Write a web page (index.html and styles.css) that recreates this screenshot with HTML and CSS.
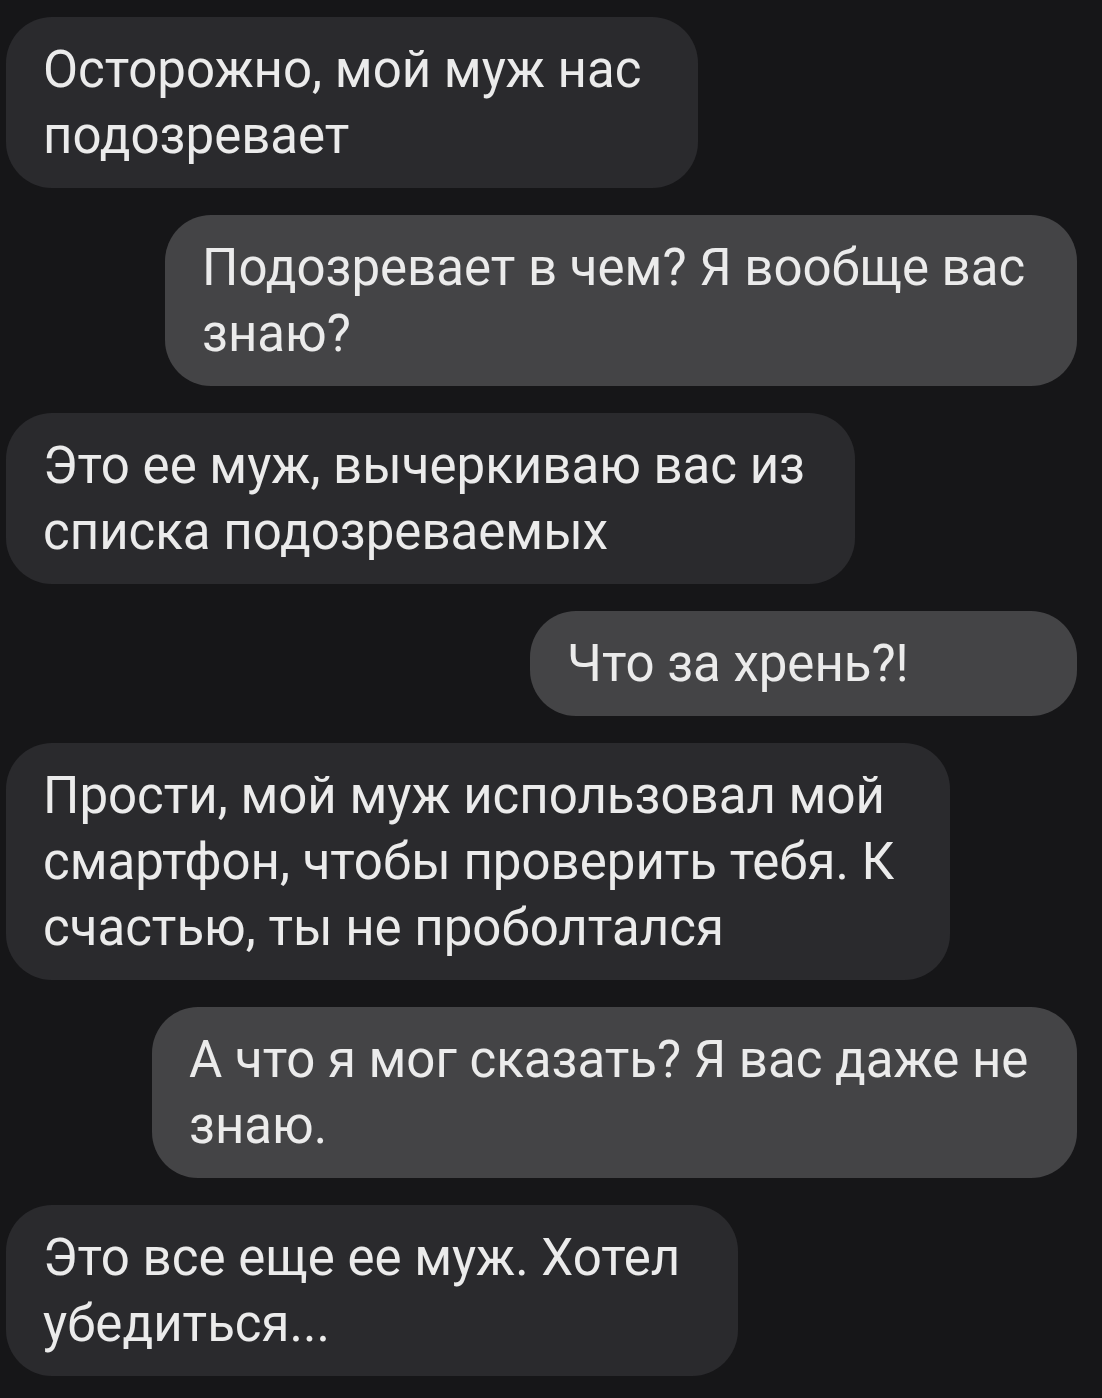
FILE: index.html
```html
<html lang="ru">
<head>
    <meta charset="UTF-8">
    <meta name="viewport" content="width=device-width, initial-scale=1.0">
    <title>Чат</title>
    <link rel="stylesheet" href="styles.css">
</head>
<body>
    <div class="chat">
        <div class="msg in w1">Осторожно, мой муж нас<br>подозревает</div>
        <div class="msg out w2">Подозревает в чем? Я вообще вас<br>знаю?</div>
        <div class="msg in w3">Это ее муж, вычеркиваю вас из<br>списка подозреваемых</div>
        <div class="msg out w4">Что за хрень?!</div>
        <div class="msg in w5">Прости, мой муж использовал мой<br>смартфон, чтобы проверить тебя. К<br>счастью, ты не проболтался</div>
        <div class="msg out w6">А что я мог сказать? Я вас даже не<br>знаю.</div>
        <div class="msg in w7">Это все еще ее муж. Хотел<br>убедиться...</div>
    </div>
</body>
</html>
```

FILE: styles.css
```css
body {
    margin: 0;
    padding: 0;
    background-color: #161618;
    font-family: Roboto, 'Noto Sans', sans-serif;
    color: #ebebeb;
}

.chat {
    display: flex;
    flex-direction: column;
    gap: 27px;
    padding: 17px 25px 22px 6px;
}

.msg {
    box-sizing: border-box;
    font-size: 51px;
    line-height: 66px;
    padding: 20px 20px 19px 37px;
    border-radius: 46px;
    white-space: nowrap;
}

.in {
    align-self: flex-start;
    background-color: #2a2a2d;
}

.out {
    align-self: flex-end;
    background-color: #444446;
}

.w1 { width: 692px; }
.w2 { width: 912px; }
.w3 { width: 849px; }
.w4 { width: 547px; }
.w5 { width: 944px; }
.w6 { width: 925px; }
.w7 { width: 732px; }
```
